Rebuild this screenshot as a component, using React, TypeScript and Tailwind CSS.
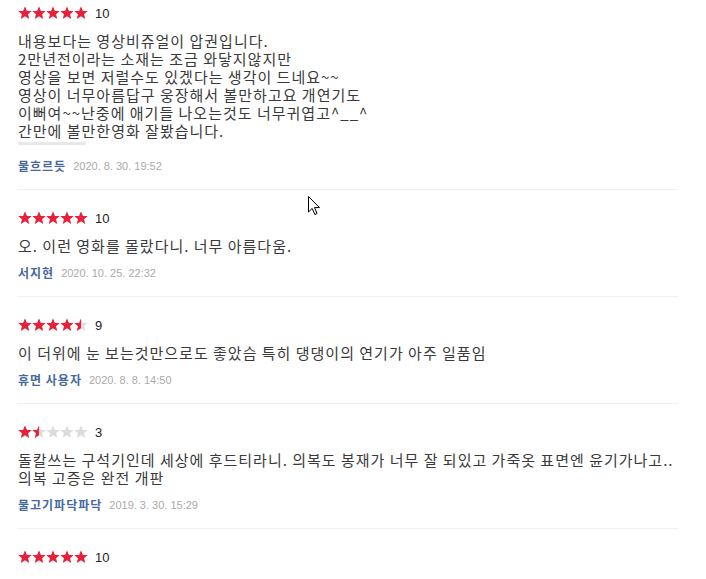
const reviews = [
  {
    score: 10,
    lines: [
      "내용보다는 영상비쥬얼이 압권입니다.",
      "2만년전이라는 소재는 조금 와닿지않지만",
      "영상을 보면 저럴수도 있겠다는 생각이 드네요~~",
      "영상이 너무아름답구 웅장해서 볼만하고요 개연기도",
      "이뻐여~~난중에 애기들 나오는것도 너무귀엽고^__^",
      "간만에 볼만한영화 잘봤습니다.",
    ],
    bar: true,
    user: "물흐르듯",
    date: "2020. 8. 30. 19:52",
  },
  {
    score: 10,
    lines: ["오. 이런 영화를 몰랐다니. 너무 아름다움."],
    user: "서지현",
    date: "2020. 10. 25. 22:32",
  },
  {
    score: 9,
    lines: ["이 더위에 눈 보는것만으로도 좋았슴 특히 댕댕이의 연기가 아주 일품임"],
    user: "휴면 사용자",
    date: "2020. 8. 8. 14:50",
  },
  {
    score: 3,
    lines: [
      "돌칼쓰는 구석기인데 세상에 후드티라니. 의복도 봉재가 너무 잘 되있고 가죽옷 표면엔 윤기가나고..",
      "의복 고증은 완전 개판",
    ],
    user: "물고기파닥파닥",
    date: "2019. 3. 30. 15:29",
  },
];

function StarRow({ color }: { color: string }) {
  return (
    <svg width="70" height="14" viewBox="0 0 70 14" className="block">
      {[0, 1, 2, 3, 4].map((i) => (
        <polygon
          key={i}
          transform={`translate(${i * 14} 0)`}
          points="7,0.4 8.9,4.9 13.7,5.1 10,8.2 11.2,13 7,10.3 2.8,13 4,8.2 0.3,5.1 5.1,4.9"
          fill={color}
        />
      ))}
    </svg>
  );
}

function Stars({ score }: { score: number }) {
  return (
    <div className="relative h-[14px] w-[70px]">
      <StarRow color="#dcdcdc" />
      <div className="absolute left-0 top-0 h-[14px] overflow-hidden" style={{ width: `${score * 7}px` }}>
        <StarRow color="#e8203a" />
      </div>
    </div>
  );
}

export default function App() {
  return (
    <div className="relative min-h-[579px] w-[706px] bg-white pt-[4px] font-['Noto_Sans_CJK_KR',sans-serif] text-[#333]">
      <ul className="ml-[17px] w-[661px]">
        {reviews.map((r, i) => (
          <li key={i} className={`pb-[15px] ${i === 0 ? "" : "pt-[19px]"} border-b border-[#f0f0f0]`}>
            <div className="flex h-[18px] items-center gap-[7px] pl-[1px]">
              <Stars score={r.score} />
              <span className="font-['Liberation_Sans',sans-serif] text-[13px] leading-none text-[#222]">{r.score}</span>
            </div>
            <div className="mt-[10px] pl-[1px] text-[15px] leading-[18px] tracking-[1px] whitespace-nowrap text-[#3a3a3a]">
              {r.lines.map((l, j) => (
                <div key={j}>{l}</div>
              ))}
            </div>
            {r.bar && <div className="ml-[1px] mt-[2px] h-[3px] w-[68px] bg-[#e8e8e8]" />}
            <div className={`${r.bar ? "mt-[13px]" : "mt-[10px]"} flex h-[16px] items-center gap-[7px] pl-[1px]`}>
              <span className="text-[12px] font-bold tracking-[1px] text-[#46689c]">{r.user}</span>
              <span className="font-['Liberation_Sans',sans-serif] text-[11px] text-[#aaa]">{r.date}</span>
            </div>
          </li>
        ))}
        <li className="pt-[19px]">
          <div className="flex h-[18px] items-center gap-[7px] pl-[1px]">
            <Stars score={10} />
            <span className="font-['Liberation_Sans',sans-serif] text-[13px] leading-none text-[#222]">10</span>
          </div>
        </li>
      </ul>
      <svg className="absolute left-[308px] top-[196px]" width="13" height="20" viewBox="0 0 13 20">
        <path d="M0.5 0.5 L0.5 16 L4.2 12.4 L6.8 18.5 L9 17.5 L6.5 11.6 L11.5 11.6 Z" fill="#fff" stroke="#000" strokeWidth="1" strokeLinejoin="round" />
      </svg>
    </div>
  );
}
